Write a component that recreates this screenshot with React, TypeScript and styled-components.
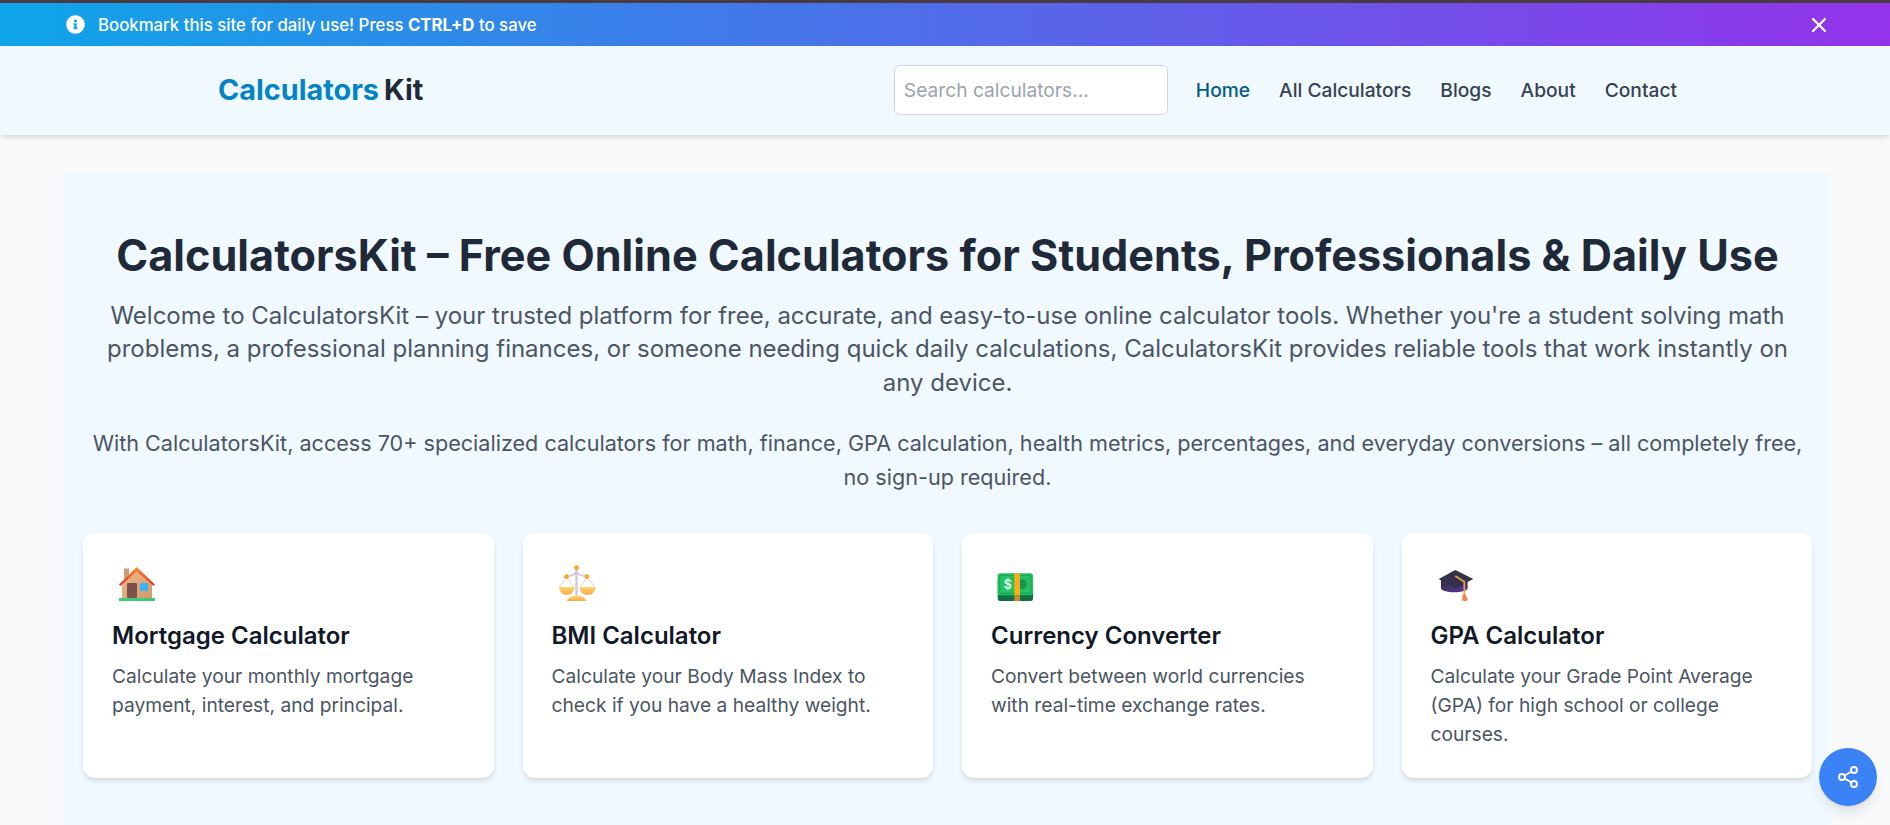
import styled, { createGlobalStyle } from 'styled-components';
import { FaInfoCircle } from 'react-icons/fa';
import { Share2, X } from 'lucide-react';

const GlobalStyle = createGlobalStyle`
  * { box-sizing: border-box; }
  html, body { margin: 0; padding: 0; overflow: hidden; height: 825px; }
  body {
    background: #f9fafb;
    font-family: Inter, "Noto Sans", sans-serif;
    color: #1f2937;
  }
`;

function HouseIcon() {
  return (
    <svg width="40" height="40" viewBox="0 0 40 40">
      <defs>
        <linearGradient id="wall" x1="0" y1="0" x2="1" y2="1">
          <stop offset="0" stopColor="#f2b98a" />
          <stop offset="1" stopColor="#cf9a6c" />
        </linearGradient>
        <linearGradient id="roof" x1="0" y1="0" x2="0" y2="1">
          <stop offset="0" stopColor="#fc8f2f" />
          <stop offset="1" stopColor="#e0352b" />
        </linearGradient>
      </defs>
      <rect x="8" y="4.5" width="5" height="14" fill="#cfa078" />
      <path d="M6 20 20.7 6 36 20v14H6z" fill="url(#wall)" />
      <path d="M3 20.5 20.7 3 39 20.5 37.5 22 20.7 7.5 4.5 22z" fill="url(#roof)" />
      <rect x="11" y="19" width="10" height="15" rx="1" fill="#7a524c" />
      <rect x="24" y="19" width="8" height="8" fill="#3bb4f6" />
      <rect x="3" y="34" width="36" height="3" fill="#3ecb78" />
    </svg>
  );
}

function ScalesIcon() {
  return (
    <svg width="40" height="40" viewBox="0 0 40 40">
      <defs>
        <linearGradient id="pan" x1="0" y1="0" x2="0" y2="1">
          <stop offset="0" stopColor="#ffd567" />
          <stop offset="1" stopColor="#fba94a" />
        </linearGradient>
      </defs>
      <g stroke="#d3c6da" fill="none">
        <path d="M20.5 4v29" strokeWidth="2.4" />
        <path d="M10.5 12.7 17 11l3.5-3 3.5 3 7 1.7" strokeWidth="1.7" />
        <path d="M10.5 13 3.5 23M10.5 13 18 23M31 13 24 23M31 13 39 23" strokeWidth=".8" />
      </g>
      <path d="M3 23h15.5c-.5 5-3.5 8-7.7 8S3.5 28 3 23z" fill="url(#pan)" />
      <path d="M23.5 23H39.5c-.5 5-3.5 8-8 8s-7.5-3-8-8z" fill="url(#pan)" />
      <path d="M11 37c.8-3.5 4.5-5.3 9.5-5.3S29.2 33.5 30 37z" fill="url(#pan)" />
      <circle cx="20.5" cy="3.7" r="2.4" fill="#f9a825" />
      <circle cx="10.5" cy="12.7" r="2.4" fill="#f9a825" />
      <circle cx="31" cy="12.7" r="2.4" fill="#f9a825" />
    </svg>
  );
}

function MoneyIcon() {
  return (
    <svg width="40" height="40" viewBox="0 0 40 40">
      <rect x="2.7" y="12" width="35.3" height="25" rx="2.5" fill="#0f6f45" />
      <rect x="2.7" y="9.3" width="35.3" height="22" rx="2.5" fill="#24c263" />
      <rect x="4.7" y="11.3" width="31.3" height="18" rx="1" fill="none" stroke="#18a653" strokeWidth="1" />
      <circle cx="27" cy="20.3" r="5" fill="#179650" />
      <text x="12.7" y="25" fontFamily="Inter, sans-serif" fontSize="12.5" fontWeight="600" fill="#e6fff0" textAnchor="middle">$</text>
      <rect x="19.3" y="9.3" width="5.7" height="22" fill="#fbab1d" />
      <rect x="19.3" y="31.3" width="5.7" height="5.7" fill="#c98a2a" />
    </svg>
  );
}

function CapIcon() {
  return (
    <svg width="40" height="40" viewBox="0 0 40 40">
      <defs>
        <linearGradient id="cap" x1="0" y1="0" x2="1" y2="1">
          <stop offset="0" stopColor="#33294a" />
          <stop offset="1" stopColor="#553a95" />
        </linearGradient>
      </defs>
      <path d="M6 16v8c0 2.5 6 4.3 13.3 4.3s13.4-1.800 13.4-4.3v-8z" fill="url(#cap)" />
      <path d="M20.3 6 38.3 15 20.3 24.3 3.7 15z" fill="#35304a" />
      <path d="M20.3 12 29.3 17.7V31" fill="none" stroke="#eda23a" strokeWidth="1.7" />
      <path d="M28 30.5h2.7l2 5c-.5 2-4.7 2-5.7 0z" fill="#f77f50" />
    </svg>
  );
}

const tools = [
  { title: 'Mortgage Calculator', desc: 'Calculate your monthly mortgage payment, interest, and principal.', icon: <HouseIcon /> },
  { title: 'BMI Calculator', desc: 'Calculate your Body Mass Index to check if you have a healthy weight.', icon: <ScalesIcon /> },
  { title: 'Currency Converter', desc: 'Convert between world currencies with real-time exchange rates.', icon: <MoneyIcon /> },
  { title: 'GPA Calculator', desc: 'Calculate your Grade Point Average (GPA) for high school or college courses.', icon: <CapIcon /> },
];

const navLinks = ['Home', 'All Calculators', 'Blogs', 'About', 'Contact'];

export default function App() {
  return (
    <>
      <GlobalStyle />
      <TopStripe />
      <Banner>
        <BannerText>
          <FaInfoCircle size={19} />
          <span>
            Bookmark this site for daily use! Press <strong>CTRL+D</strong> to save
          </span>
        </BannerText>
        <CloseButton aria-label="Close">
          <X size={24} strokeWidth={2.2} />
        </CloseButton>
      </Banner>
      <Header>
        <Logo>
          <LogoAccent>Calculators</LogoAccent>
          <span>Kit</span>
        </Logo>
        <HeaderRight>
          <SearchInput placeholder="Search calculators..." />
          <Nav>
            {navLinks.map((label, i) => (
              <NavLink key={label} $active={i === 0} href="#">
                {label}
              </NavLink>
            ))}
          </Nav>
        </HeaderRight>
      </Header>
      <Main>
        <Hero>
          <Intro>
            <Title>CalculatorsKit – Free Online Calculators for Students, Professionals &amp; Daily Use</Title>
            <Lead>
              Welcome to CalculatorsKit – your trusted platform for free, accurate, and easy-to-use online calculator
              tools. Whether you're a student solving math problems, a professional planning finances, or someone needing
              quick daily calculations, CalculatorsKit provides reliable tools that work instantly on any device.
            </Lead>
            <SubLead>
              With CalculatorsKit, access 70+ specialized calculators for math, finance, GPA calculation, health metrics,
              percentages, and everyday conversions – all completely free, no sign-up required.
            </SubLead>
          </Intro>
          <CardGrid>
            {tools.map((tool) => (
              <Card key={tool.title}>
                <CardIcon>{tool.icon}</CardIcon>
                <CardTitle>{tool.title}</CardTitle>
                <CardDesc>{tool.desc}</CardDesc>
              </Card>
            ))}
          </CardGrid>
        </Hero>
      </Main>
      <ShareButton aria-label="Share">
        <Share2 size={24} />
      </ShareButton>
    </>
  );
}

const TopStripe = styled.div`
  height: 3px;
  background: #4a3a42;
`;

const Banner = styled.div`
  height: 43px;
  padding: 0 59px 0 66px;
  display: flex;
  align-items: center;
  justify-content: space-between;
  color: #fff;
  background: linear-gradient(90deg, #0ea5e9, #9333ea);
`;

const BannerText = styled.div`
  display: flex;
  align-items: center;
  gap: 13px;
  font-size: 16.8px;
  font-weight: 500;

  strong {
    font-weight: 700;
  }
`;

const CloseButton = styled.button`
  display: flex;
  padding: 0;
  border: none;
  background: none;
  color: #fff;
`;

const Header = styled.header`
  height: 89px;
  padding: 0 213px 2px 218px;
  display: flex;
  align-items: center;
  justify-content: space-between;
  background: #f0f9ff;
  box-shadow: 0 4px 6px -1px rgba(0, 0, 0, 0.1), 0 2px 4px -2px rgba(0, 0, 0, 0.1);
  position: relative;
`;

const Logo = styled.div`
  display: flex;
  gap: 5px;
  font-size: 28.8px;
  font-weight: 700;
  color: #1f2937;
`;

const LogoAccent = styled.span`
  color: #0284c7;
`;

const HeaderRight = styled.div`
  display: flex;
  align-items: center;
  gap: 28px;
`;

const SearchInput = styled.input`
  width: 274px;
  height: 50px;
  padding: 0 9px;
  border: 1px solid #d1d5db;
  border-radius: 6px;
  background: #fff;
  font-family: inherit;
  font-size: 19.2px;

  &::placeholder {
    color: #9ca3af;
  }
`;

const Nav = styled.nav`
  display: flex;
  gap: 29px;
`;

const NavLink = styled.a<{ $active?: boolean }>`
  font-size: 19.2px;
  font-weight: 500;
  text-decoration: none;
  color: ${(p) => (p.$active ? '#075985' : '#374151')};
`;

const Main = styled.main`
  padding: 38px 60px 0 64px;
`;

const Hero = styled.section`
  padding: 57px 18px 64px 19px;
  background: #f0f9ff;
  text-align: center;
`;

const Intro = styled.div`
  padding: 0 5px;
`;

const Title = styled.h1`
  margin: 0 0 17px;
  font-size: 43.2px;
  font-weight: 700;
  line-height: 1.2;
  color: #1f2937;
`;

const Lead = styled.p`
  margin: 0 0 26px;
  font-size: 24px;
  line-height: 1.4;
  color: #4b5563;
`;

const SubLead = styled.p`
  margin: 0 0 38px;
  font-size: 21.6px;
  line-height: 1.6;
  color: #4b5563;
`;

const CardGrid = styled.div`
  display: grid;
  grid-template-columns: repeat(4, 1fr);
  gap: 29px;
  text-align: left;
`;

const Card = styled.article`
  height: 245px;
  padding: 31px 29px;
  background: #fff;
  border-radius: 12px;
  box-shadow: 0 4px 6px -1px rgba(0, 0, 0, 0.1), 0 2px 4px -2px rgba(0, 0, 0, 0.1);
`;

const CardIcon = styled.div`
  height: 44px;
  margin-bottom: 12px;
  padding-left: 4px;
`;

const CardTitle = styled.h3`
  margin: 0 0 11px;
  font-size: 24px;
  font-weight: 600;
  line-height: 1.3;
  color: #111827;
`;

const CardDesc = styled.p`
  margin: 0;
  font-size: 19.2px;
  line-height: 29px;
  color: #4b5563;
`;

const ShareButton = styled.button`
  position: fixed;
  right: 13px;
  bottom: 19px;
  width: 58px;
  height: 58px;
  display: flex;
  align-items: center;
  justify-content: center;
  padding: 0;
  border: none;
  border-radius: 50%;
  background: #3b82f6;
  color: #fff;
  box-shadow: 0 10px 15px -3px rgba(0, 0, 0, 0.1), 0 4px 6px -4px rgba(0, 0, 0, 0.1);
`;
